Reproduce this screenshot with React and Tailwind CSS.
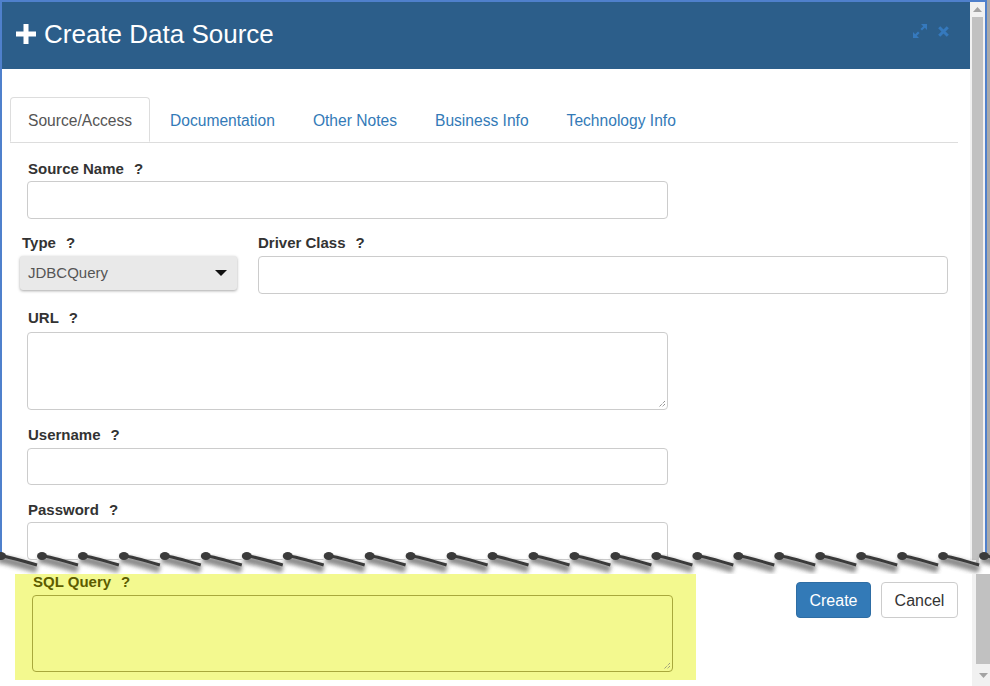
import React from 'react';

const labelCls = 'block text-[15px] leading-[20px] font-bold text-[#333]';
const inputCls = 'block border border-[#ccc] rounded-[4px] bg-white';

function Help() {
  return <span className="ml-[10px]">?</span>;
}

function Tear() {
  // saw-tooth "torn paper" edge between the two halves of the screenshot
  const period = 40.96;
  const teeth = [];
  for (let k = -1; k < 25; k++) teeth.push(37 + period * k);
  const pts = teeth.map((x) => `${x.toFixed(1)},9 ${(x + period - 0.5).toFixed(1)},19`).join(' ');
  const line = teeth
    .map((x) => `M${(x + 2).toFixed(1)} 9 Q${(x + 14).toFixed(1)} 11 ${(x + period).toFixed(1)} 19`)
    .join(' ');
  return (
    <svg className="absolute left-0 top-[546px]" width="990" height="28" viewBox="0 0 990 28">
      <defs>
        <filter id="blur" x="-10%" y="-50%" width="120%" height="200%">
          <feGaussianBlur stdDeviation="2" />
        </filter>
      </defs>
      <polygon points={`0,28 ${pts} 990,28`} fill="#fff" />
      <path d={line} stroke="#3c3c3c" strokeWidth="8" fill="none" opacity="0.6" transform="translate(0 4)" filter="url(#blur)" />
      <path d={line} stroke="#3a3a3a" strokeWidth="3" fill="none" />
      {teeth.map((x, i) => (
        <ellipse key={i} cx={x + 5} cy={10} rx={5} ry={4} fill="#3b3b3b" />
      ))}
    </svg>
  );
}

export default function App() {
  return (
    <div
      className="relative w-[990px] h-[686px] bg-white overflow-hidden"
      style={{ fontFamily: '"Liberation Sans", Arial, sans-serif' }}
    >
      {/* top half: modal */}
      <div className="flex h-[560px] overflow-hidden">
        <div className="flex w-[987px] border-l-2 border-t-2 border-r-2 border-[#4f80cc]">
          <div className="flex-1 flex flex-col">
            <div className="h-[68px] bg-[#2c5e8a] flex items-center pl-[14px] pr-[21px] pb-[4px]">
              <svg width="20" height="20" viewBox="0 0 20 20" className="mt-[1px]">
                <path d="M7.5 0h5v7.5H20v5h-7.5V20h-5v-7.5H0v-5h7.5z" fill="#fff" />
              </svg>
              <h4 className="ml-[8px] text-[26px] leading-none text-white">Create Data Source</h4>
              <div className="ml-auto flex items-center gap-[11px] mt-[-5px]">
                <svg width="14" height="14" viewBox="0 0 14 14" fill="#3579bd">
                  <path d="M8 0h6v6l-2.2-2.2-2.8 2.8-1.6-1.6 2.8-2.8z" />
                  <path d="M6 14H0V8l2.2 2.2 2.8-2.8 1.6 1.6-2.8 2.8z" />
                </svg>
                <svg width="11" height="11" viewBox="0 0 11 11">
                  <path d="M1.2 1.2l8.6 8.6M9.8 1.2l-8.6 8.6" stroke="#3579bd" strokeWidth="3" />
                </svg>
              </div>
            </div>

            <div className="pl-[8px] pr-[12px] pt-[28px]">
              <div className="flex border-b border-[#ddd] text-[15.6px]">
                <div className="h-[45px] -mb-px px-[17px] pt-[2px] flex items-center bg-white border border-[#ddd] border-b-white rounded-t-[4px] text-[#555] mr-[2px]">
                  Source/Access
                </div>
                {['Documentation', 'Other Notes', 'Business Info', 'Technology Info'].map((t) => (
                  <div key={t} className="h-[45px] px-[18px] pt-[2px] mr-[2px] flex items-center text-[#337ab7]">
                    {t}
                  </div>
                ))}
              </div>

              <div className="pt-[16px]">
                <div className="pl-[17px]">
                  <label className={`${labelCls} pl-[1px]`}>
                    Source Name
                    <Help />
                  </label>
                  <div className={`${inputCls} mt-[2px] w-[641px] h-[38px]`} />
                </div>

                <div className="flex mt-[14px] pl-[10px]">
                  <div className="w-[217px]">
                    <label className={`${labelCls} pl-[2px]`}>
                      Type
                      <Help />
                    </label>
                    <div className="mt-[3px] h-[34px] rounded-[3px] bg-[#e9e9e9] shadow-[0_1px_3px_rgba(0,0,0,0.35)] flex items-center pl-[8px] pr-[10px] text-[15px] text-[#555]">
                      JDBCQuery
                      <svg className="ml-auto" width="12" height="6" viewBox="0 0 12 6">
                        <path d="M0 0h12L6 6z" fill="#111" />
                      </svg>
                    </div>
                  </div>
                  <div className="ml-[21px]">
                    <label className={labelCls}>
                      Driver Class
                      <Help />
                    </label>
                    <div className={`${inputCls} mt-[3px] w-[690px] h-[38px]`} />
                  </div>
                </div>

                <div className="pl-[17px]">
                  <label className={`${labelCls} mt-[14px] pl-[1px]`}>
                    URL
                    <Help />
                  </label>
                  <div className={`${inputCls} relative mt-[4px] w-[641px] h-[78px]`}>
                    <svg className="absolute right-[1px] bottom-[1px]" width="9" height="9" viewBox="0 0 9 9">
                      <path d="M8 2L2 8M8 5L5 8" stroke="#666" strokeWidth="1" strokeDasharray="1 1" />
                    </svg>
                  </div>

                  <label className={`${labelCls} mt-[15px] pl-[1px]`}>
                    Username
                    <Help />
                  </label>
                  <div className={`${inputCls} mt-[3px] w-[641px] h-[37px]`} />

                  <label className={`${labelCls} mt-[15px] pl-[1px]`}>
                    Password
                    <Help />
                  </label>
                  <div className={`${inputCls} mt-[2px] w-[641px] h-[38px]`} />
                </div>
              </div>
            </div>
          </div>

          {/* scrollbar */}
          <div className="w-[15px] bg-[#f1f1f1] flex flex-col">
            <div className="h-[15px] flex items-center justify-center">
              <svg width="9" height="5" viewBox="0 0 9 5">
                <path d="M0 5h9L4.5 0z" fill="#a3a3a3" />
              </svg>
            </div>
            <div className="flex-1 mx-[2px] bg-[#c1c1c1]" />
          </div>
        </div>
        <div className="flex-1 bg-[#a9a9a9]" />
      </div>

      {/* bottom half: footer of the dialog */}
      <div className="flex h-[126px]">
        <div className="w-[15px]" />
        <div className="mt-[11px] w-[681px] h-[109px] bg-[#f3f98f] pl-[17px]">
          <label className="block text-[15px] leading-[20px] font-bold text-[#5c5c00] pl-[1px] pt-[1px]">
            SQL Query
            <Help />
          </label>
          <div className="relative mt-[3px] w-[641px] h-[77px] border border-[#a8a83c] rounded-[4px]">
            <svg className="absolute right-[1px] bottom-[1px]" width="9" height="9" viewBox="0 0 9 9">
              <path d="M8 2L2 8M8 5L5 8" stroke="#777" strokeWidth="1" strokeDasharray="1 1" />
            </svg>
          </div>
        </div>
        <div className="flex-1 flex justify-end items-start pt-[22px] pr-[14px] gap-[10px] text-[16px]">
          <button className="w-[75px] h-[36px] pt-[1px] rounded-[4px] bg-[#337ab7] border border-[#2e6da4] text-white">
            Create
          </button>
          <button className="w-[77px] h-[36px] pt-[1px] rounded-[4px] bg-white border border-[#ccc] text-[#333]">
            Cancel
          </button>
        </div>
        <div className="w-[18px] flex">
          <div className="w-[4px] bg-[#f1f1f1]" />
          <div className="flex-1 flex flex-col">
            <div className="flex-1 bg-[#c1c1c1]" />
            <div className="h-[22px] bg-[#f1f1f1] flex items-center justify-center">
              <svg width="9" height="5" viewBox="0 0 9 5">
                <path d="M0 0h9L4.5 5z" fill="#a3a3a3" />
              </svg>
            </div>
          </div>
        </div>
      </div>

      <Tear />
    </div>
  );
}
